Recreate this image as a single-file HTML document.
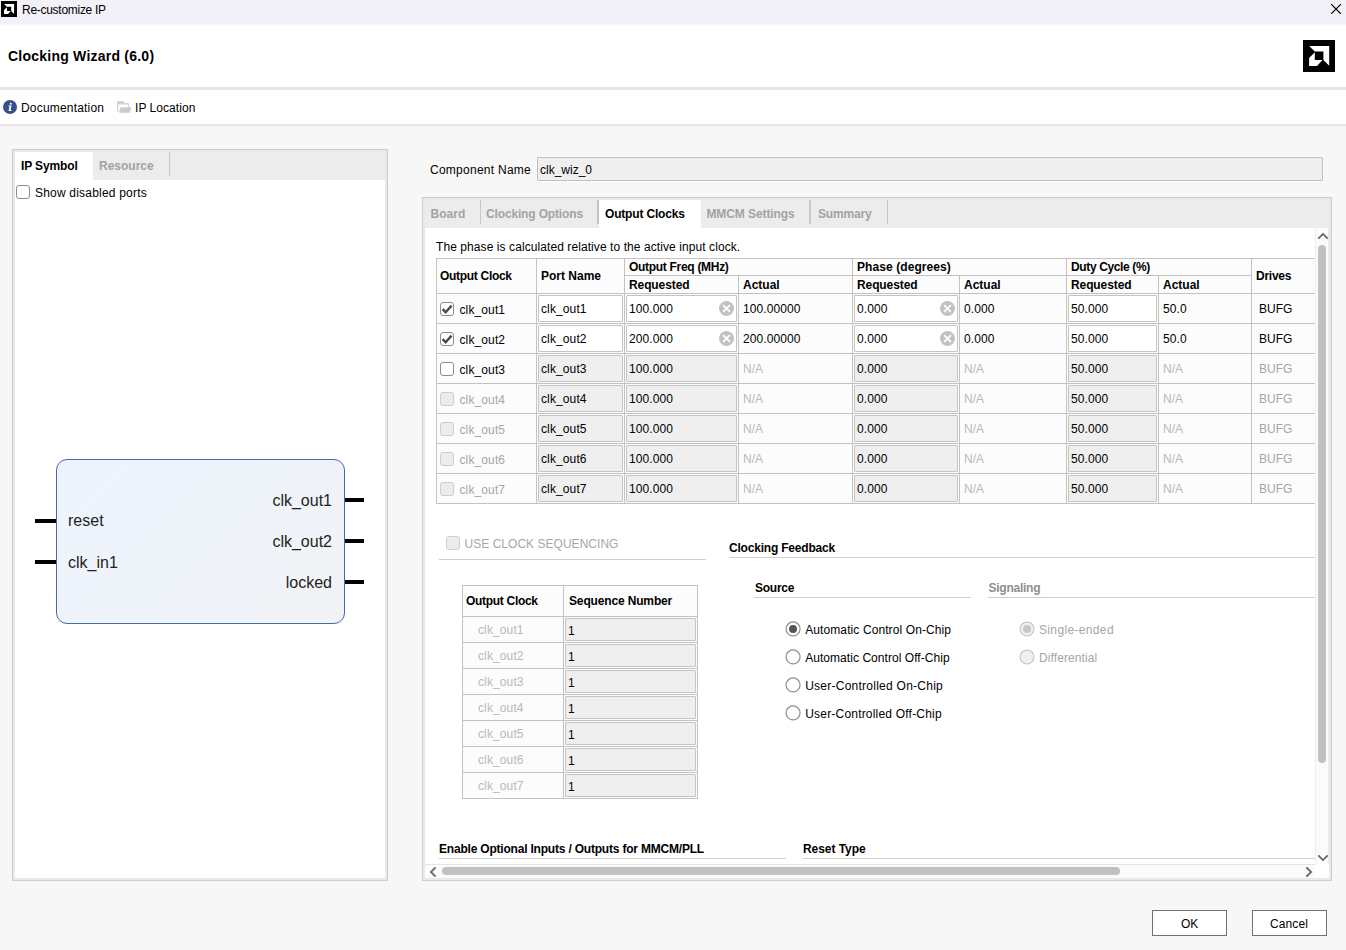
<!DOCTYPE html>
<html><head><meta charset="utf-8"><title>Re-customize IP</title><style>
html,body{margin:0;padding:0}
body{width:1346px;height:950px;position:relative;overflow:hidden;background:#f7f7f7;font-family:"Liberation Sans",sans-serif;}
body div, body span, body svg{position:absolute}
.t{white-space:nowrap;color:#000}
.s12{font-size:12px;line-height:14px}
.s14{font-size:14px;line-height:16px}
.s16{font-size:16px;line-height:18px}
.b{font-weight:bold}
.sym{color:#1e1e1e}
</style></head><body>
<div style="left:0px;top:0px;width:1346px;height:24px;background:#f3f1f8"></div>
<div style="left:0px;top:24px;width:1346px;height:1px;background:#f9f8fb"></div>
<svg style="left:1px;top:1px" width="16" height="16" viewBox="0 0 32 32"><rect width="32" height="32" fill="#000"/><path d="M6.1 6.1H26.2V25.8L20.4 20.1V11.5H11.8Z M6.1 18.1L11.8 12.3V20.1H19.5L14 26H6.1Z" fill="#fff"/></svg>
<span class="t s12 " style="left:22px;top:3px;letter-spacing:-0.28px;">Re-customize IP</span>
<svg style="left:1331px;top:4px" width="10" height="10" viewBox="0 0 10 10"><path d="M0.5 0.5L9.5 9.5M9.5 0.5L0.5 9.5" stroke="#000" stroke-width="1.1" stroke-linecap="square" fill="none"/></svg>
<div style="left:0px;top:25px;width:1346px;height:62px;background:#fff"></div>
<span class="t s14 b" style="left:8px;top:48px;letter-spacing:0.23px;">Clocking Wizard (6.0)</span>
<svg style="left:1303px;top:40px" width="32" height="32" viewBox="0 0 32 32"><rect width="32" height="32" fill="#000"/><path d="M6.1 6.1H26.2V25.8L20.4 20.1V11.5H11.8Z M6.1 18.1L11.8 12.3V20.1H19.5L14 26H6.1Z" fill="#fff"/></svg>
<div style="left:0px;top:87px;width:1346px;height:3px;background:#e6e6e6"></div>
<div style="left:0px;top:90px;width:1346px;height:34px;background:#fff"></div>
<svg style="left:3px;top:100px" width="14" height="14" viewBox="0 0 14 14"><circle cx="7" cy="7" r="7" fill="#35508c"/><circle cx="7.8" cy="3.8" r="1" fill="#fff"/><path d="M5.5 5.6H8.5L7.6 10.1H8.5L8.35 10.9H5.6L5.75 10.1L6.5 6.4H5.35Z" fill="#fff"/></svg>
<span class="t s12 " style="left:21px;top:101px;letter-spacing:0.19px;">Documentation</span>
<svg style="left:117px;top:101px" width="15" height="12" viewBox="0 0 15 12"><path d="M0 1Q0 0 1 0H6Q6.7 0 6.9 .9L7.2 2H11Q12 2 12 3V6.2H10.9V3.4H1.3V10.8H0Z" fill="#d2d2d2"/><path d="M3.9 6.3H13.6Q14.2 6.3 14 7L12.9 11.2Q12.8 11.7 12.2 11.7H2.6Q2 11.7 2.2 11.1L3.3 6.9Q3.4 6.3 3.9 6.3Z" fill="#cacaca"/></svg>
<span class="t s12 " style="left:135px;top:101px;letter-spacing:0.05px;">IP Location</span>
<div style="left:0px;top:124px;width:1346px;height:2px;background:#e6e6e6"></div>
<div style="left:12px;top:149px;width:376px;height:732px;background:#e9e9e9;border:1px solid #cdcdcd;box-sizing:border-box"></div>
<div style="left:15px;top:152px;width:370px;height:28px;background:#ececec"></div>
<div style="left:15px;top:152px;width:78px;height:28px;background:#fff"></div>
<div style="left:15px;top:180px;width:370px;height:698px;background:#fff"></div>
<div style="left:169px;top:152px;width:1px;height:24px;background:#c8c8c8"></div>
<span class="t s12 b" style="left:21px;top:159px;letter-spacing:-0.12px;">IP Symbol</span>
<span class="t s12 b" style="left:99px;top:159px;color:#a3a3a3">Resource</span>
<div style="left:16px;top:185px;width:14px;height:14px;border:1px solid #8c8c8c;border-radius:3px;box-sizing:border-box;background:#fff"></div>
<span class="t s12 " style="left:35px;top:186px;letter-spacing:0.2px;">Show disabled ports</span>
<div style="left:56px;top:459px;width:289px;height:165px;box-sizing:border-box;border:1px solid #4a68a8;border-radius:11px;background:linear-gradient(135deg,#eef4fd 0%,#eff4fb 50%,#f1f2f4 100%)"></div>
<div style="left:35px;top:519px;width:21px;height:4px;background:#000"></div>
<div style="left:35px;top:560px;width:21px;height:4px;background:#000"></div>
<div style="left:345px;top:498px;width:19px;height:4px;background:#000"></div>
<div style="left:345px;top:539px;width:19px;height:4px;background:#000"></div>
<div style="left:345px;top:580px;width:19px;height:4px;background:#000"></div>
<span class="t s16 sym" style="left:68px;top:512px;">reset</span>
<span class="t s16 sym" style="left:68px;top:554px;">clk_in1</span>
<span class="t s16 sym" style="right:1014px;top:492px">clk_out1</span>
<span class="t s16 sym" style="right:1014px;top:533px">clk_out2</span>
<span class="t s16 sym" style="right:1014px;top:574px">locked</span>
<span class="t s12 " style="left:430px;top:163px;letter-spacing:0.26px;">Component Name</span>
<div style="left:537px;top:157px;width:786px;height:24px;background:#efefef;border:1px solid #bfbfbf;box-sizing:border-box;border-radius:1px;box-shadow:0 0 0 1px #fcfcfc"></div>
<span class="t s12 " style="left:540px;top:163px;">clk_wiz_0</span>
<div style="left:422px;top:197px;width:910px;height:684px;background:#e9e9e9;border:1px solid #cdcdcd;box-sizing:border-box"></div>
<div style="left:425px;top:200px;width:903px;height:28px;background:#ececec"></div>
<div style="left:599px;top:200px;width:102px;height:28px;background:#fff"></div>
<div style="left:425px;top:228px;width:903px;height:650px;background:#fff"></div>
<div style="left:480px;top:200px;width:1px;height:24px;background:#c8c8c8"></div>
<div style="left:597px;top:200px;width:2px;height:24px;background:#c2c2c2"></div>
<div style="left:809px;top:200px;width:2px;height:24px;background:#c8c8c8"></div>
<div style="left:887px;top:200px;width:1px;height:24px;background:#c8c8c8"></div>
<span class="t s12 b" style="left:430.6px;top:207px;color:#a3a3a3">Board</span>
<span class="t s12 b" style="left:486px;top:207px;letter-spacing:-0.15px;color:#a3a3a3">Clocking Options</span>
<span class="t s12 b" style="left:605px;top:207px;letter-spacing:-0.18px;">Output Clocks</span>
<span class="t s12 b" style="left:706.4px;top:207px;letter-spacing:-0.08px;color:#a3a3a3">MMCM Settings</span>
<span class="t s12 b" style="left:818px;top:207px;letter-spacing:-0.15px;color:#a3a3a3">Summary</span>
<div id="vp" style="left:425px;top:228px;width:890px;height:636px;overflow:hidden">
<span class="t s12 " style="left:11px;top:12px;letter-spacing:0.08px;">The phase is calculated relative to the active input clock.</span>
<div style="left:11px;top:30px;width:900px;height:246px;background:#fcfcfc"></div>
<div style="left:11px;top:30px;width:900px;height:1px;background:#c3c3c3"></div>
<div style="left:199px;top:47px;width:627px;height:1px;background:#c3c3c3"></div>
<div style="left:11px;top:65px;width:900px;height:1px;background:#c3c3c3"></div>
<div style="left:11px;top:95px;width:900px;height:1px;background:#c3c3c3"></div>
<div style="left:11px;top:125px;width:900px;height:1px;background:#c3c3c3"></div>
<div style="left:11px;top:155px;width:900px;height:1px;background:#c3c3c3"></div>
<div style="left:11px;top:185px;width:900px;height:1px;background:#c3c3c3"></div>
<div style="left:11px;top:215px;width:900px;height:1px;background:#c3c3c3"></div>
<div style="left:11px;top:245px;width:900px;height:1px;background:#c3c3c3"></div>
<div style="left:11px;top:275px;width:900px;height:1px;background:#c3c3c3"></div>
<div style="left:11px;top:30px;width:1px;height:246px;background:#c3c3c3"></div>
<div style="left:111px;top:30px;width:1px;height:246px;background:#c3c3c3"></div>
<div style="left:199px;top:30px;width:1px;height:246px;background:#c3c3c3"></div>
<div style="left:427px;top:30px;width:1px;height:246px;background:#c3c3c3"></div>
<div style="left:641px;top:30px;width:1px;height:246px;background:#c3c3c3"></div>
<div style="left:826px;top:30px;width:1px;height:246px;background:#c3c3c3"></div>
<div style="left:911px;top:30px;width:1px;height:246px;background:#c3c3c3"></div>
<div style="left:313px;top:47px;width:1px;height:229px;background:#c3c3c3"></div>
<div style="left:534px;top:47px;width:1px;height:229px;background:#c3c3c3"></div>
<div style="left:733px;top:47px;width:1px;height:229px;background:#c3c3c3"></div>
<span class="t s12 b" style="left:15px;top:41px;letter-spacing:-0.3px;">Output Clock</span>
<span class="t s12 b" style="left:116px;top:41px;">Port Name</span>
<span class="t s12 b" style="left:204px;top:32px;letter-spacing:-0.3px;">Output Freq (MHz)</span>
<span class="t s12 b" style="left:204px;top:50px;letter-spacing:-0.1px;">Requested</span>
<span class="t s12 b" style="left:318px;top:50px;">Actual</span>
<span class="t s12 b" style="left:432px;top:32px;letter-spacing:0.08px;">Phase (degrees)</span>
<span class="t s12 b" style="left:432px;top:50px;letter-spacing:-0.1px;">Requested</span>
<span class="t s12 b" style="left:539px;top:50px;">Actual</span>
<span class="t s12 b" style="left:646px;top:32px;letter-spacing:-0.37px;">Duty Cycle (%)</span>
<span class="t s12 b" style="left:646px;top:50px;letter-spacing:-0.1px;">Requested</span>
<span class="t s12 b" style="left:738px;top:50px;">Actual</span>
<span class="t s12 b" style="left:831px;top:41px;letter-spacing:-0.25px;">Drives</span>
<div style="left:15px;top:74px;width:14px;height:14px;border:1px solid #8c8c8c;border-radius:3px;box-sizing:border-box;background:#fff"><svg width="14" height="14" viewBox="0 0 14 14" style="position:absolute;left:-1px;top:-1px"><path d="M2.6 7.2L5.6 10.2L11.6 3.6" stroke="#4a4a4a" stroke-width="2.4" fill="none"/></svg></div>
<span class="t s12 " style="left:34.5px;top:75px;letter-spacing:0.12px;">clk_out1</span>
<div style="left:113px;top:67px;width:85px;height:27px;background:#fff;border:1px solid #c4c4c4;box-sizing:border-box;border-radius:1px"></div>
<div style="left:201px;top:67px;width:111px;height:27px;background:#fff;border:1px solid #c4c4c4;box-sizing:border-box;border-radius:1px"></div>
<div style="left:429px;top:67px;width:104px;height:27px;background:#fff;border:1px solid #c4c4c4;box-sizing:border-box;border-radius:1px"></div>
<div style="left:643px;top:67px;width:89px;height:27px;background:#fff;border:1px solid #c4c4c4;box-sizing:border-box;border-radius:1px"></div>
<span class="t s12 " style="left:116px;top:74px;letter-spacing:0.12px;">clk_out1</span>
<span class="t s12 " style="left:204px;top:74px;letter-spacing:0.1px;">100.000</span>
<span class="t s12 " style="left:432px;top:74px;letter-spacing:0.1px;">0.000</span>
<span class="t s12 " style="left:646px;top:74px;letter-spacing:0.1px;">50.000</span>
<div style="left:294px;top:73px;width:15px;height:15px"><svg width="15" height="15" viewBox="0 0 15 15"><circle cx="7.5" cy="7.5" r="7.5" fill="#c2c2c2"/><path d="M4.1 4.1L10.9 10.9M10.9 4.1L4.1 10.9" stroke="#fff" stroke-width="1.8" fill="none"/></svg></div>
<div style="left:515px;top:73px;width:15px;height:15px"><svg width="15" height="15" viewBox="0 0 15 15"><circle cx="7.5" cy="7.5" r="7.5" fill="#c2c2c2"/><path d="M4.1 4.1L10.9 10.9M10.9 4.1L4.1 10.9" stroke="#fff" stroke-width="1.8" fill="none"/></svg></div>
<span class="t s12 " style="left:318px;top:74px;letter-spacing:0.1px;">100.00000</span>
<span class="t s12 " style="left:539px;top:74px;letter-spacing:0.1px;">0.000</span>
<span class="t s12 " style="left:738px;top:74px;letter-spacing:0.1px;">50.0</span>
<span class="t s12 " style="left:834px;top:74px;">BUFG</span>
<div style="left:15px;top:104px;width:14px;height:14px;border:1px solid #8c8c8c;border-radius:3px;box-sizing:border-box;background:#fff"><svg width="14" height="14" viewBox="0 0 14 14" style="position:absolute;left:-1px;top:-1px"><path d="M2.6 7.2L5.6 10.2L11.6 3.6" stroke="#4a4a4a" stroke-width="2.4" fill="none"/></svg></div>
<span class="t s12 " style="left:34.5px;top:105px;letter-spacing:0.12px;">clk_out2</span>
<div style="left:113px;top:97px;width:85px;height:27px;background:#fff;border:1px solid #c4c4c4;box-sizing:border-box;border-radius:1px"></div>
<div style="left:201px;top:97px;width:111px;height:27px;background:#fff;border:1px solid #c4c4c4;box-sizing:border-box;border-radius:1px"></div>
<div style="left:429px;top:97px;width:104px;height:27px;background:#fff;border:1px solid #c4c4c4;box-sizing:border-box;border-radius:1px"></div>
<div style="left:643px;top:97px;width:89px;height:27px;background:#fff;border:1px solid #c4c4c4;box-sizing:border-box;border-radius:1px"></div>
<span class="t s12 " style="left:116px;top:104px;letter-spacing:0.12px;">clk_out2</span>
<span class="t s12 " style="left:204px;top:104px;letter-spacing:0.1px;">200.000</span>
<span class="t s12 " style="left:432px;top:104px;letter-spacing:0.1px;">0.000</span>
<span class="t s12 " style="left:646px;top:104px;letter-spacing:0.1px;">50.000</span>
<div style="left:294px;top:103px;width:15px;height:15px"><svg width="15" height="15" viewBox="0 0 15 15"><circle cx="7.5" cy="7.5" r="7.5" fill="#c2c2c2"/><path d="M4.1 4.1L10.9 10.9M10.9 4.1L4.1 10.9" stroke="#fff" stroke-width="1.8" fill="none"/></svg></div>
<div style="left:515px;top:103px;width:15px;height:15px"><svg width="15" height="15" viewBox="0 0 15 15"><circle cx="7.5" cy="7.5" r="7.5" fill="#c2c2c2"/><path d="M4.1 4.1L10.9 10.9M10.9 4.1L4.1 10.9" stroke="#fff" stroke-width="1.8" fill="none"/></svg></div>
<span class="t s12 " style="left:318px;top:104px;letter-spacing:0.1px;">200.00000</span>
<span class="t s12 " style="left:539px;top:104px;letter-spacing:0.1px;">0.000</span>
<span class="t s12 " style="left:738px;top:104px;letter-spacing:0.1px;">50.0</span>
<span class="t s12 " style="left:834px;top:104px;">BUFG</span>
<div style="left:15px;top:134px;width:14px;height:14px;border:1px solid #8c8c8c;border-radius:3px;box-sizing:border-box;background:#fff"></div>
<span class="t s12 " style="left:34.5px;top:135px;letter-spacing:0.12px;">clk_out3</span>
<div style="left:113px;top:127px;width:85px;height:27px;background:#efefef;border:1px solid #c4c4c4;box-sizing:border-box;border-radius:1px"></div>
<div style="left:201px;top:127px;width:111px;height:27px;background:#efefef;border:1px solid #c4c4c4;box-sizing:border-box;border-radius:1px"></div>
<div style="left:429px;top:127px;width:104px;height:27px;background:#efefef;border:1px solid #c4c4c4;box-sizing:border-box;border-radius:1px"></div>
<div style="left:643px;top:127px;width:89px;height:27px;background:#efefef;border:1px solid #c4c4c4;box-sizing:border-box;border-radius:1px"></div>
<span class="t s12 " style="left:116px;top:134px;letter-spacing:0.12px;">clk_out3</span>
<span class="t s12 " style="left:204px;top:134px;letter-spacing:0.1px;">100.000</span>
<span class="t s12 " style="left:432px;top:134px;letter-spacing:0.1px;">0.000</span>
<span class="t s12 " style="left:646px;top:134px;letter-spacing:0.1px;">50.000</span>
<span class="t s12 " style="left:318px;top:134px;color:#b9b9b9">N/A</span>
<span class="t s12 " style="left:539px;top:134px;color:#b9b9b9">N/A</span>
<span class="t s12 " style="left:738px;top:134px;color:#b9b9b9">N/A</span>
<span class="t s12 " style="left:834px;top:134px;color:#a6a6a6">BUFG</span>
<div style="left:15px;top:164px;width:14px;height:14px;border:1px solid #cecece;border-radius:3px;box-sizing:border-box;background:#ebecee"></div>
<span class="t s12 " style="left:34.5px;top:165px;letter-spacing:0.12px;color:#a6a6a6">clk_out4</span>
<div style="left:113px;top:157px;width:85px;height:27px;background:#efefef;border:1px solid #c4c4c4;box-sizing:border-box;border-radius:1px"></div>
<div style="left:201px;top:157px;width:111px;height:27px;background:#efefef;border:1px solid #c4c4c4;box-sizing:border-box;border-radius:1px"></div>
<div style="left:429px;top:157px;width:104px;height:27px;background:#efefef;border:1px solid #c4c4c4;box-sizing:border-box;border-radius:1px"></div>
<div style="left:643px;top:157px;width:89px;height:27px;background:#efefef;border:1px solid #c4c4c4;box-sizing:border-box;border-radius:1px"></div>
<span class="t s12 " style="left:116px;top:164px;letter-spacing:0.12px;">clk_out4</span>
<span class="t s12 " style="left:204px;top:164px;letter-spacing:0.1px;">100.000</span>
<span class="t s12 " style="left:432px;top:164px;letter-spacing:0.1px;">0.000</span>
<span class="t s12 " style="left:646px;top:164px;letter-spacing:0.1px;">50.000</span>
<span class="t s12 " style="left:318px;top:164px;color:#b9b9b9">N/A</span>
<span class="t s12 " style="left:539px;top:164px;color:#b9b9b9">N/A</span>
<span class="t s12 " style="left:738px;top:164px;color:#b9b9b9">N/A</span>
<span class="t s12 " style="left:834px;top:164px;color:#a6a6a6">BUFG</span>
<div style="left:15px;top:194px;width:14px;height:14px;border:1px solid #cecece;border-radius:3px;box-sizing:border-box;background:#ebecee"></div>
<span class="t s12 " style="left:34.5px;top:195px;letter-spacing:0.12px;color:#a6a6a6">clk_out5</span>
<div style="left:113px;top:187px;width:85px;height:27px;background:#efefef;border:1px solid #c4c4c4;box-sizing:border-box;border-radius:1px"></div>
<div style="left:201px;top:187px;width:111px;height:27px;background:#efefef;border:1px solid #c4c4c4;box-sizing:border-box;border-radius:1px"></div>
<div style="left:429px;top:187px;width:104px;height:27px;background:#efefef;border:1px solid #c4c4c4;box-sizing:border-box;border-radius:1px"></div>
<div style="left:643px;top:187px;width:89px;height:27px;background:#efefef;border:1px solid #c4c4c4;box-sizing:border-box;border-radius:1px"></div>
<span class="t s12 " style="left:116px;top:194px;letter-spacing:0.12px;">clk_out5</span>
<span class="t s12 " style="left:204px;top:194px;letter-spacing:0.1px;">100.000</span>
<span class="t s12 " style="left:432px;top:194px;letter-spacing:0.1px;">0.000</span>
<span class="t s12 " style="left:646px;top:194px;letter-spacing:0.1px;">50.000</span>
<span class="t s12 " style="left:318px;top:194px;color:#b9b9b9">N/A</span>
<span class="t s12 " style="left:539px;top:194px;color:#b9b9b9">N/A</span>
<span class="t s12 " style="left:738px;top:194px;color:#b9b9b9">N/A</span>
<span class="t s12 " style="left:834px;top:194px;color:#a6a6a6">BUFG</span>
<div style="left:15px;top:224px;width:14px;height:14px;border:1px solid #cecece;border-radius:3px;box-sizing:border-box;background:#ebecee"></div>
<span class="t s12 " style="left:34.5px;top:225px;letter-spacing:0.12px;color:#a6a6a6">clk_out6</span>
<div style="left:113px;top:217px;width:85px;height:27px;background:#efefef;border:1px solid #c4c4c4;box-sizing:border-box;border-radius:1px"></div>
<div style="left:201px;top:217px;width:111px;height:27px;background:#efefef;border:1px solid #c4c4c4;box-sizing:border-box;border-radius:1px"></div>
<div style="left:429px;top:217px;width:104px;height:27px;background:#efefef;border:1px solid #c4c4c4;box-sizing:border-box;border-radius:1px"></div>
<div style="left:643px;top:217px;width:89px;height:27px;background:#efefef;border:1px solid #c4c4c4;box-sizing:border-box;border-radius:1px"></div>
<span class="t s12 " style="left:116px;top:224px;letter-spacing:0.12px;">clk_out6</span>
<span class="t s12 " style="left:204px;top:224px;letter-spacing:0.1px;">100.000</span>
<span class="t s12 " style="left:432px;top:224px;letter-spacing:0.1px;">0.000</span>
<span class="t s12 " style="left:646px;top:224px;letter-spacing:0.1px;">50.000</span>
<span class="t s12 " style="left:318px;top:224px;color:#b9b9b9">N/A</span>
<span class="t s12 " style="left:539px;top:224px;color:#b9b9b9">N/A</span>
<span class="t s12 " style="left:738px;top:224px;color:#b9b9b9">N/A</span>
<span class="t s12 " style="left:834px;top:224px;color:#a6a6a6">BUFG</span>
<div style="left:15px;top:254px;width:14px;height:14px;border:1px solid #cecece;border-radius:3px;box-sizing:border-box;background:#ebecee"></div>
<span class="t s12 " style="left:34.5px;top:255px;letter-spacing:0.12px;color:#a6a6a6">clk_out7</span>
<div style="left:113px;top:247px;width:85px;height:27px;background:#efefef;border:1px solid #c4c4c4;box-sizing:border-box;border-radius:1px"></div>
<div style="left:201px;top:247px;width:111px;height:27px;background:#efefef;border:1px solid #c4c4c4;box-sizing:border-box;border-radius:1px"></div>
<div style="left:429px;top:247px;width:104px;height:27px;background:#efefef;border:1px solid #c4c4c4;box-sizing:border-box;border-radius:1px"></div>
<div style="left:643px;top:247px;width:89px;height:27px;background:#efefef;border:1px solid #c4c4c4;box-sizing:border-box;border-radius:1px"></div>
<span class="t s12 " style="left:116px;top:254px;letter-spacing:0.12px;">clk_out7</span>
<span class="t s12 " style="left:204px;top:254px;letter-spacing:0.1px;">100.000</span>
<span class="t s12 " style="left:432px;top:254px;letter-spacing:0.1px;">0.000</span>
<span class="t s12 " style="left:646px;top:254px;letter-spacing:0.1px;">50.000</span>
<span class="t s12 " style="left:318px;top:254px;color:#b9b9b9">N/A</span>
<span class="t s12 " style="left:539px;top:254px;color:#b9b9b9">N/A</span>
<span class="t s12 " style="left:738px;top:254px;color:#b9b9b9">N/A</span>
<span class="t s12 " style="left:834px;top:254px;color:#a6a6a6">BUFG</span>
<div style="left:21px;top:308px;width:14px;height:14px;border:1px solid #cecece;border-radius:3px;box-sizing:border-box;background:#ebecee"></div>
<span class="t s12 " style="left:39.5px;top:309px;letter-spacing:0.03px;color:#a6a6a6">USE CLOCK SEQUENCING</span>
<div style="left:14px;top:331px;width:267px;height:1px;background:#cfcfcf"></div>
<div style="left:37px;top:357px;width:236px;height:214px;background:#fcfcfc"></div>
<div style="left:37px;top:357px;width:236px;height:1px;background:#c3c3c3"></div>
<div style="left:37px;top:388px;width:236px;height:1px;background:#c3c3c3"></div>
<div style="left:37px;top:414px;width:236px;height:1px;background:#c3c3c3"></div>
<div style="left:37px;top:440px;width:236px;height:1px;background:#c3c3c3"></div>
<div style="left:37px;top:466px;width:236px;height:1px;background:#c3c3c3"></div>
<div style="left:37px;top:492px;width:236px;height:1px;background:#c3c3c3"></div>
<div style="left:37px;top:518px;width:236px;height:1px;background:#c3c3c3"></div>
<div style="left:37px;top:544px;width:236px;height:1px;background:#c3c3c3"></div>
<div style="left:37px;top:570px;width:236px;height:1px;background:#c3c3c3"></div>
<div style="left:37px;top:357px;width:1px;height:214px;background:#c3c3c3"></div>
<div style="left:138px;top:357px;width:1px;height:214px;background:#c3c3c3"></div>
<div style="left:272px;top:357px;width:1px;height:214px;background:#c3c3c3"></div>
<span class="t s12 b" style="left:41px;top:366px;letter-spacing:-0.3px;">Output Clock</span>
<span class="t s12 b" style="left:144px;top:366px;letter-spacing:-0.15px;">Sequence Number</span>
<span class="t s12 " style="left:53px;top:395px;letter-spacing:0.12px;color:#b9b9b9">clk_out1</span>
<div style="left:140px;top:390px;width:131px;height:23px;background:#efefef;border:1px solid #c4c4c4;box-sizing:border-box;border-radius:1px"></div>
<span class="t s12 " style="left:143px;top:396px;">1</span>
<span class="t s12 " style="left:53px;top:421px;letter-spacing:0.12px;color:#b9b9b9">clk_out2</span>
<div style="left:140px;top:416px;width:131px;height:23px;background:#efefef;border:1px solid #c4c4c4;box-sizing:border-box;border-radius:1px"></div>
<span class="t s12 " style="left:143px;top:422px;">1</span>
<span class="t s12 " style="left:53px;top:447px;letter-spacing:0.12px;color:#b9b9b9">clk_out3</span>
<div style="left:140px;top:442px;width:131px;height:23px;background:#efefef;border:1px solid #c4c4c4;box-sizing:border-box;border-radius:1px"></div>
<span class="t s12 " style="left:143px;top:448px;">1</span>
<span class="t s12 " style="left:53px;top:473px;letter-spacing:0.12px;color:#b9b9b9">clk_out4</span>
<div style="left:140px;top:468px;width:131px;height:23px;background:#efefef;border:1px solid #c4c4c4;box-sizing:border-box;border-radius:1px"></div>
<span class="t s12 " style="left:143px;top:474px;">1</span>
<span class="t s12 " style="left:53px;top:499px;letter-spacing:0.12px;color:#b9b9b9">clk_out5</span>
<div style="left:140px;top:494px;width:131px;height:23px;background:#efefef;border:1px solid #c4c4c4;box-sizing:border-box;border-radius:1px"></div>
<span class="t s12 " style="left:143px;top:500px;">1</span>
<span class="t s12 " style="left:53px;top:525px;letter-spacing:0.12px;color:#b9b9b9">clk_out6</span>
<div style="left:140px;top:520px;width:131px;height:23px;background:#efefef;border:1px solid #c4c4c4;box-sizing:border-box;border-radius:1px"></div>
<span class="t s12 " style="left:143px;top:526px;">1</span>
<span class="t s12 " style="left:53px;top:551px;letter-spacing:0.12px;color:#b9b9b9">clk_out7</span>
<div style="left:140px;top:546px;width:131px;height:23px;background:#efefef;border:1px solid #c4c4c4;box-sizing:border-box;border-radius:1px"></div>
<span class="t s12 " style="left:143px;top:552px;">1</span>
<span class="t s12 b" style="left:304px;top:313px;letter-spacing:-0.2px;">Clocking Feedback</span>
<div style="left:304px;top:329px;width:607px;height:1px;background:#cfcfcf"></div>
<span class="t s12 b" style="left:330px;top:353px;letter-spacing:-0.25px;">Source</span>
<div style="left:329px;top:369px;width:217px;height:1px;background:#cfcfcf"></div>
<span class="t s12 b" style="left:563.5px;top:353px;letter-spacing:-0.25px;color:#8f8f8f">Signaling</span>
<div style="left:563px;top:369px;width:348px;height:1px;background:#cfcfcf"></div>
<svg style="left:359px;top:392px" width="18" height="18" viewBox="0 0 18 18"><circle cx="9.05" cy="8.95" r="7" fill="#fff" stroke="#8e8e8e" stroke-width="1.2"/><circle cx="9.05" cy="8.95" r="4" fill="#555"/></svg>
<span class="t s12 " style="left:380.20000000000005px;top:395px;letter-spacing:0.1px;">Automatic Control On-Chip</span>
<svg style="left:359px;top:420px" width="18" height="18" viewBox="0 0 18 18"><circle cx="9.05" cy="8.95" r="7" fill="#fff" stroke="#8e8e8e" stroke-width="1.2"/></svg>
<span class="t s12 " style="left:380.20000000000005px;top:423px;letter-spacing:0.05px;">Automatic Control Off-Chip</span>
<svg style="left:359px;top:448px" width="18" height="18" viewBox="0 0 18 18"><circle cx="9.05" cy="8.95" r="7" fill="#fff" stroke="#8e8e8e" stroke-width="1.2"/></svg>
<span class="t s12 " style="left:380.20000000000005px;top:451px;letter-spacing:0.25px;">User-Controlled On-Chip</span>
<svg style="left:359px;top:476px" width="18" height="18" viewBox="0 0 18 18"><circle cx="9.05" cy="8.95" r="7" fill="#fff" stroke="#8e8e8e" stroke-width="1.2"/></svg>
<span class="t s12 " style="left:380.20000000000005px;top:479px;letter-spacing:0.2px;">User-Controlled Off-Chip</span>
<svg style="left:593px;top:392px" width="18" height="18" viewBox="0 0 18 18"><circle cx="9.05" cy="8.95" r="7" fill="#efefef" stroke="#c4c4c4" stroke-width="1.1"/><circle cx="9.05" cy="8.95" r="4" fill="#c6c6c6"/></svg>
<span class="t s12 " style="left:614px;top:395px;letter-spacing:0.35px;color:#a6a6a6">Single-ended</span>
<svg style="left:593px;top:420px" width="18" height="18" viewBox="0 0 18 18"><circle cx="9.05" cy="8.95" r="7" fill="#efefef" stroke="#c4c4c4" stroke-width="1.1"/></svg>
<span class="t s12 " style="left:614px;top:423px;letter-spacing:0.1px;color:#a6a6a6">Differential</span>
<span class="t s12 b" style="left:14px;top:614px;letter-spacing:-0.2px;">Enable Optional Inputs / Outputs for MMCM/PLL</span>
<div style="left:14px;top:630px;width:347px;height:1px;background:#cfcfcf"></div>
<span class="t s12 b" style="left:378px;top:614px;letter-spacing:-0.05px;">Reset Type</span>
<div style="left:378px;top:630px;width:533px;height:1px;background:#cfcfcf"></div>
</div>
<div style="left:1315px;top:228px;width:13px;height:636px;background:#fbfbfb;border-left:1px solid #ededed;box-sizing:border-box"></div>
<svg style="left:1317px;top:231px" width="12" height="10" viewBox="0 0 12 10"><path d="M1.3 7.6L6 2.9L10.7 7.6" stroke="#666" stroke-width="1.8" fill="none"/></svg>
<div style="left:1318px;top:245px;width:8px;height:518px;background:#c1c1c1;border-radius:4px"></div>
<svg style="left:1317px;top:853px" width="12" height="10" viewBox="0 0 12 10"><path d="M1.3 2.4L6 7.1L10.7 2.4" stroke="#666" stroke-width="1.8" fill="none"/></svg>
<div style="left:425px;top:864px;width:890px;height:14px;background:#fbfbfb;border-top:1px solid #e4e4e4;box-sizing:border-box"></div>
<div style="left:1315px;top:864px;width:14px;height:14px;background:#fff"></div>
<svg style="left:428px;top:866px" width="10" height="12" viewBox="0 0 10 12"><path d="M7.6 1.3L2.9 6L7.6 10.7" stroke="#666" stroke-width="1.8" fill="none"/></svg>
<svg style="left:1304px;top:866px" width="10" height="12" viewBox="0 0 10 12"><path d="M2.4 1.3L7.1 6L2.4 10.7" stroke="#666" stroke-width="1.8" fill="none"/></svg>
<div style="left:442px;top:867px;width:678px;height:8px;background:#c1c1c1;border-radius:4px"></div>
<div style="left:1152px;top:910px;width:75px;height:26px;background:#fff;border:1px solid #707070;box-sizing:border-box"></div>
<span class="t s12 " style="left:1181px;top:917px;">OK</span>
<div style="left:1252px;top:910px;width:75px;height:26px;background:#fff;border:1px solid #707070;box-sizing:border-box"></div>
<span class="t s12 " style="left:1270px;top:917px;letter-spacing:0.1px;">Cancel</span>
</body></html>
